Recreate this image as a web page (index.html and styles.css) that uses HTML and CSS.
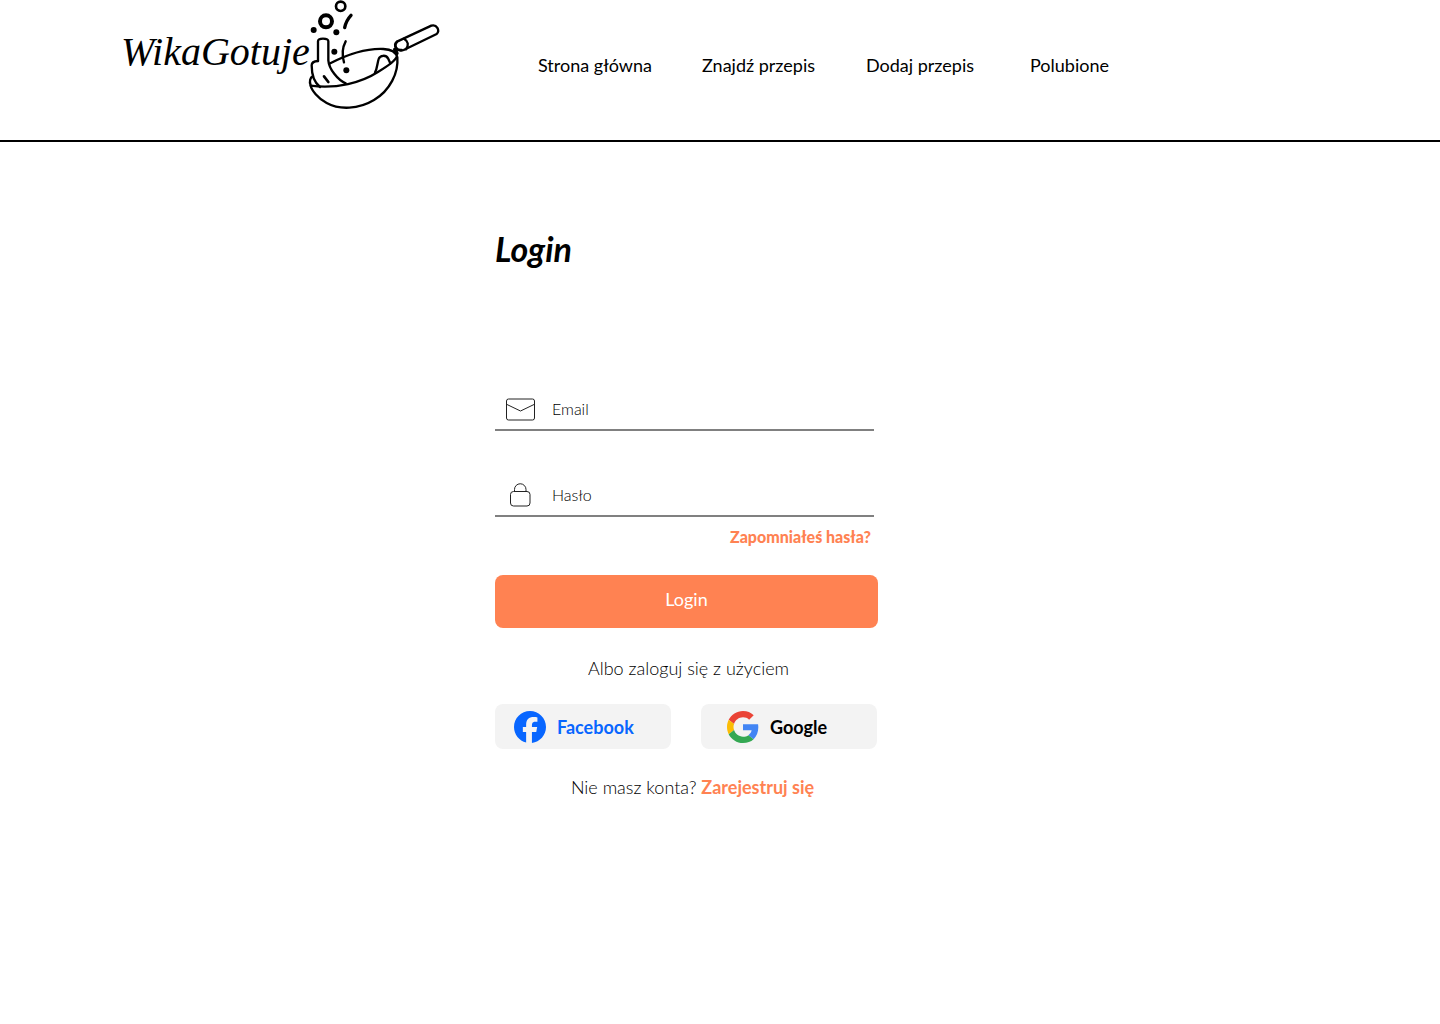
FILE: index.html
```html
<!DOCTYPE html>
<html lang="pl">
<head>
  <meta charset="utf-8">
  <meta name="viewport" content="width=device-width, initial-scale=1">
  <title>WikaGotuje – Login</title>
  <link rel="stylesheet" href="styles.css">
</head>
<body>
  <header class="header">
    <a class="logo" href="#">
      <span class="logo-name">WikaGotuje</span>
      <svg class="logo-pan" viewBox="0 0 450 345" fill="none" stroke="#000" stroke-width="7" stroke-linecap="round" stroke-linejoin="round" aria-hidden="true">
        <circle cx="122" cy="19" r="14" stroke-width="8"/>
        <circle cx="78" cy="64" r="18" stroke-width="12"/>
        <g fill="#000" stroke="none">
          <circle cx="41" cy="90" r="9"/>
          <circle cx="109" cy="97" r="9"/>
          <circle cx="103" cy="155" r="9"/>
          <circle cx="139" cy="211" r="9"/>
        </g>
        <path d="M153 46Q138 62 134 83" stroke-width="10"/>
        <path d="M137 124Q122 152 132 187"/>
        <path d="M54 183V124Q54 116 69 116Q85 116 85 124V181C87 207 113 240 137 250"/>
        <path d="M54 183Q35 184 35 196C35 226 43 248 60 261"/>
        <path d="M72 229L85 246" stroke-width="8"/>
        <path d="M91 190C145 162 205 145 250 147C274 148 288 156 292 172C296 218 270 272 222 300C176 328 118 330 80 309C54 295 34 270 32 256C27 244 31 232 38 229"/>
        <path d="M32 257C110 268 185 247 235 215C265 197 285 184 291 169"/>
        <path d="M225 218C232 205 232 189 236 177C240 165 258 164 264 175L271 190"/>
        <path d="M285 149L290 160" stroke-width="12"/>
        <path d="M291 125L394 77C410 72 421 91 410 102L311 150C291 157 278 136 291 125Z"/>
        <path d="M312 116C325 124 327 135 318 148M291 125C281 137 288 151 305 150"/>
      </svg>
    </a>
    <nav class="nav" aria-label="Menu">
      <a href="#">Strona główna</a>
      <a href="#">Znajdź przepis</a>
      <a href="#">Dodaj przepis</a>
      <a href="#">Polubione</a>
    </nav>
  </header>

  <main class="main">
    <h1 class="title">Login</h1>
    <form class="form">
      <div class="field">
        <label class="field-icon" for="email" aria-label="Email">
          <svg width="30" height="24" viewBox="0 0 30 24" fill="none" stroke="#222" aria-hidden="true">
            <rect x="0.500" y="2" width="28" height="21" rx="2"/>
            <path d="M1 7.500L14.500 14L28 7.500"/>
          </svg>
        </label>
        <input class="field-input" id="email" type="email" placeholder="Email">
      </div>
      <div class="field">
        <label class="field-icon" for="password" aria-label="Hasło">
          <svg width="30" height="24" viewBox="0 0 30 24" fill="none" stroke="#222" aria-hidden="true">
            <rect x="4.500" y="8.500" width="19.500" height="14.500" rx="3"/>
            <path d="M8.500 8.500V6.500A5.700 5.700 0 0 1 20 6.500V8.500"/>
          </svg>
        </label>
        <input class="field-input" id="password" type="password" placeholder="Hasło">
      </div>
      <a class="forgot" href="#">Zapomniałeś hasła?</a>
      <button class="submit" type="submit">Login</button>
      <p class="note">Albo zaloguj się z użyciem</p>
      <div class="providers">
        <button class="provider facebook" type="button">
          <svg width="32" height="32" viewBox="0 0 24 24" fill="#0866ff" aria-hidden="true">
            <path d="M9.101 23.691v-7.980H6.627v-3.667h2.474v-1.580c0-4.085 1.848-5.978 5.858-5.978.401 0 .955.042 1.468.103a8.680 8.680 0 0 1 1.141.195v3.325a8.623 8.623 0 0 0-.653-.036 26.805 26.805 0 0 0-.733-.009c-.707 0-1.259.096-1.675.309a1.686 1.686 0 0 0-.679.622c-.258.420-.374.995-.374 1.752v1.297h3.919l-.386 2.103-.287 1.564h-3.246v8.245C19.396 23.238 24 18.179 24 12.044c0-6.627-5.373-12-12-12s-12 5.373-12 12c0 5.628 3.874 10.350 9.101 11.647Z"/>
          </svg>
          Facebook
        </button>
        <button class="provider google" type="button">
          <svg width="32" height="32" viewBox="0 0 48 48" aria-hidden="true">
            <path fill="#ea4335" d="M24 9.500c3.540 0 6.710 1.220 9.210 3.600l6.850-6.850C35.900 2.380 30.470 0 24 0 14.620 0 6.510 5.380 2.560 13.220l7.980 6.190C12.430 13.720 17.740 9.500 24 9.500z"/>
            <path fill="#4285f4" d="M46.980 24.550c0-1.570-.150-3.090-.380-4.550H24v9.020h12.940c-.580 2.960-2.260 5.480-4.780 7.180l7.730 6c4.510-4.180 7.090-10.360 7.090-17.650z"/>
            <path fill="#fbbc05" d="M10.530 28.590c-.480-1.450-.760-2.990-.760-4.590s.270-3.140.760-4.590l-7.980-6.190C.920 16.460 0 20.120 0 24c0 3.880.920 7.540 2.560 10.780l7.970-6.190z"/>
            <path fill="#34a853" d="M24 48c6.480 0 11.930-2.130 15.890-5.810l-7.730-6c-2.150 1.450-4.920 2.300-8.160 2.300-6.260 0-11.570-4.220-13.470-9.910l-7.980 6.190C6.510 42.620 14.620 48 24 48z"/>
          </svg>
          Google
        </button>
      </div>
      <p class="note signup">Nie masz konta? <a class="register" href="#">Zarejestruj się</a></p>
    </form>
  </main>
</body>
</html>
```
FILE: styles.css
```css
* {
  box-sizing: border-box;
}

body {
  margin: 0;
  background: #fff;
  color: #000;
  font-family: Lato, sans-serif;
  font-size: 18px;
  line-height: 24px;
}

a {
  color: inherit;
  text-decoration: none;
}

button {
  border: 0;
  border-radius: 8px;
  font: inherit;
  cursor: pointer;
}

.header {
  display: flex;
  gap: 88px;
  min-height: 142px;
  padding-left: 121px;
  border-bottom: 2px solid #000;
}

.logo {
  display: flex;
  flex: none;
}

.logo-name {
  width: 179px;
  padding-top: 26px;
  font-family: "Liberation Serif", serif;
  font-size: 40px;
  font-style: italic;
  line-height: 52px;
  white-space: nowrap;
}

.logo-pan {
  width: 150px;
  height: 115px;
}

.nav {
  display: grid;
  grid-template-columns: repeat(4, 164px);
  align-content: start;
  padding-top: 53px;
}

.main {
  max-width: 878px;
  padding: 85px 0 48px 495px;
}

.title {
  margin: 0 0 117px;
  font-size: 34px;
  font-style: italic;
  font-weight: 700;
  line-height: 44px;
}

.form {
  display: flex;
  flex-direction: column;
}

.field {
  display: flex;
  align-items: center;
  gap: 16px;
  height: 43px;
  margin: 0 4px 43px 0;
  padding-left: 11px;
  border-bottom: 2px solid #808080;
}

.field + .field {
  margin-bottom: 8px;
}

.field-icon,
.provider svg {
  display: block;
  flex: none;
}

.field-icon svg {
  display: block;
}

.field-input {
  flex: 1;
  min-width: 0;
  padding: 0;
  border: 0;
  outline: 0;
  background: none;
  font: inherit;
  font-size: 16px;
  font-weight: 300;
}

.field-input::placeholder {
  color: #000;
  opacity: 1;
}

.forgot {
  align-self: flex-end;
  margin: 0 7px 26px 0;
  color: #ff8252;
  font-size: 16px;
  font-weight: 900;
}

.submit {
  height: 53px;
  padding-bottom: 6px;
  background: #ff8252;
  color: #fff;
}

.note {
  margin: 28px 0 24px;
  padding-left: 4px;
  font-weight: 300;
  text-align: center;
}

.signup {
  margin-top: 26px;
  padding-left: 12px;
}

.providers {
  display: grid;
  grid-template-columns: 1fr 1fr;
  gap: 30px;
  padding-right: 1px;
}

.provider {
  display: flex;
  align-items: center;
  gap: 11px;
  height: 45px;
  background: #f3f3f3;
  font-weight: 700;
}

.facebook {
  padding-left: 19px;
  color: #0866ff;
}

.google {
  padding-left: 26px;
  color: #000;
}

.register {
  color: #ff8252;
  font-weight: 700;
}
```
